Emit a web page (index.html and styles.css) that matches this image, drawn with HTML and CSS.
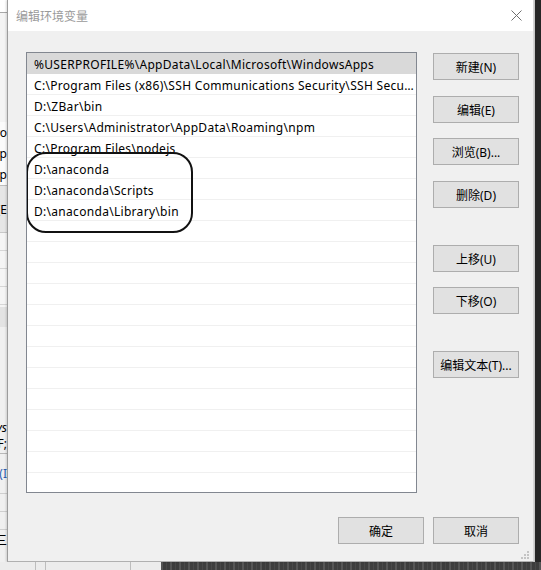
FILE: index.html
```html
<!DOCTYPE html>
<html lang="zh-CN">
<head>
<meta charset="utf-8">
<title>编辑环境变量</title>
<link rel="stylesheet" href="styles.css">
</head>
<body>
<div class="screen">
  <div class="top">
    <div class="bg-left">
      <div class="bl-white"></div>
      <div class="bl-line"></div>
      <div class="bl-pale"></div>
      <div class="bl-text">ro</div>
      <div class="bl-text">p</div>
      <div class="bl-text">p</div>
      <div class="bl-grey"><span>(E</span></div>
      <div class="bl-rows"><div></div><div></div><div></div><div></div></div>
      <div class="bl-grey2"></div>
      <div class="bl-pale2"></div>
      <div class="bl-text2"><i>vs</i></div>
      <div class="bl-text2 bl-under">F;</div>
      <div class="bl-blue">(I</div>
      <div class="bl-rows2"><div></div><div></div></div>
      <div class="bl-text3">三</div>
    </div>

    <div class="dialog">
      <div class="titlebar">
        <span class="title">编辑环境变量</span>
        <svg class="close" width="11" height="11" viewBox="0 0 11 11"><path d="M0.5 0.5 L10.5 10.5 M10.5 0.5 L0.5 10.5" stroke="#6f6f6f" stroke-width="1" fill="none"/></svg>
      </div>
      <div class="body">
        <div class="main">
          <div class="list">
            <div class="row sel">%USERPROFILE%\AppData\Local\Microsoft\WindowsApps</div>
            <div class="row">C:\Program Files (x86)\SSH Communications Security\SSH Secure Shell</div>
            <div class="row">D:\ZBar\bin</div>
            <div class="row">C:\Users\Administrator\AppData\Roaming\npm</div>
            <div class="row">C:\Program Files\nodejs</div>
            <div class="row">D:\anaconda</div>
            <div class="row">D:\anaconda\Scripts</div>
            <div class="row">D:\anaconda\Library\bin</div>
            <div class="row"></div>
            <div class="row"></div>
            <div class="row"></div>
            <div class="row"></div>
            <div class="row"></div>
            <div class="row"></div>
            <div class="row"></div>
            <div class="row"></div>
            <div class="row"></div>
            <div class="row"></div>
            <div class="row"></div>
            <div class="row"></div>
            <div class="row"></div>
            <div class="mark"></div>
          </div>
          <div class="btn-col">
            <div class="btn">新建(N)</div>
            <div class="btn g16">编辑(E)</div>
            <div class="btn g15">浏览(B)...</div>
            <div class="btn g16">删除(D)</div>
            <div class="btn g37">上移(U)</div>
            <div class="btn g15">下移(O)</div>
            <div class="btn g37">编辑文本(T)...</div>
          </div>
        </div>
        <div class="footer">
          <div class="btn">确定</div>
          <div class="btn">取消</div>
        </div>
      </div>
      <svg class="grip" width="8" height="8" viewBox="0 0 8 8">
        <rect x="6" y="0" width="2" height="2" fill="#c4c4c4"/>
        <rect x="3" y="3" width="2" height="2" fill="#c4c4c4"/>
        <rect x="6" y="3" width="2" height="2" fill="#c4c4c4"/>
        <rect x="0" y="6" width="2" height="2" fill="#c4c4c4"/>
        <rect x="3" y="6" width="2" height="2" fill="#c4c4c4"/>
        <rect x="6" y="6" width="2" height="2" fill="#c4c4c4"/>
      </svg>
    </div>

    <div class="bg-right"></div>
  </div>
  <div class="bottom">
    <div class="bottom-light"><div class="vl v1"></div><div class="vl v2"></div><div class="vl v3"></div></div>
    <div class="bottom-dark"></div>
  </div>
</div>
</body>
</html>
```

FILE: styles.css
```css
* { box-sizing: border-box; }
html, body { margin: 0; padding: 0; }
body {
  width: 541px;
  height: 570px;
  overflow: hidden;
  background: #f0f0f0;
  font-family: "Noto Sans", "Noto Sans CJK SC", sans-serif;
  font-size: 12px;
  color: #000;
}
.screen { width: 541px; height: 570px; display: flex; flex-direction: column; }
.top { display: flex; height: 562px; }

/* left background window fragment */
.bg-left { width: 7px; height: 562px; overflow: hidden; background: #f0f0f0; display: flex; flex-direction: column; }
.bg-left > div { flex: none; }
.bl-white { height: 12px; background: #ffffff; }
.bl-line { height: 1px; background: #a8a8a8; }
.bl-pale { height: 109px; background: #f4f4f4; }
.bl-text { height: 21px; line-height: 21px; background: #fbfbfb; display: flex; justify-content: flex-end; font-size: 12px; white-space: nowrap; }
.bl-grey { height: 48px; background: #e6e6e6; border-top: 1px solid #bdbdbd; border-bottom: 1px solid #c8c8c8; display: flex; justify-content: flex-end; align-items: center; white-space: nowrap; }
.bl-rows { height: 74px; background: #f5f5f5; display: flex; flex-direction: column; }
.bl-rows div { height: 18px; border-bottom: 1px solid #d6d6d6; }
.bl-grey2 { height: 20px; background: #e3e3e3; }
.bl-pale2 { height: 93px; background: #f0f0f0; }
.bl-text2 { height: 16px; line-height: 16px; display: flex; justify-content: flex-end; white-space: nowrap; }
.bl-under { border-bottom: 1px solid #b8b8b8; height: 18px; }
.bl-blue { height: 40px; line-height: 40px; color: #2c5fb0; display: flex; justify-content: flex-end; white-space: nowrap; border-bottom: 1px solid #cfcfcf; }
.bl-rows2 { height: 36px; display: flex; flex-direction: column; }
.bl-rows2 div { height: 18px; border-bottom: 1px solid #cfcfcf; }
.bl-text3 { height: 20px; line-height: 20px; display: flex; justify-content: flex-end; white-space: nowrap; font-family: "Noto Sans CJK SC", sans-serif; }

/* dialog */
.dialog {
  position: relative;
  width: 527px;
  height: 562px;
  background: #f0f0f0;
  border-left: 1px solid #9c9c9c;
  border-right: 1px solid #d6d6d6;
  border-bottom: 1px solid #b0b0b0;
  box-shadow: -1px 0 2px rgba(0,0,0,0.15);
  display: flex;
  flex-direction: column;
}
.titlebar {
  height: 31px;
  background: #ffffff;
  display: flex;
  align-items: center;
  justify-content: space-between;
  padding: 0 11px 0 8px;
}
.title {
  font-family: "Noto Sans CJK SC", sans-serif;
  font-size: 12px;
  color: #9a9a9a;
  margin-top: -1px;
}
.close { display: block; }

.body {
  padding: 21px 14px 0 18px;
  display: flex;
  flex-direction: column;
}
.main { display: flex; gap: 16px; }
.list {
  position: relative;
  width: 391px;
  height: 441px;
  background: #ffffff;
  border: 1px solid #828790;
  overflow: hidden;
}
.row {
  height: 21px;
  border-bottom: 1px solid #f0f0f0;
  line-height: 18px;
  padding: 3px 1px 0 7px;
  white-space: nowrap;
  overflow: hidden;
  text-overflow: ellipsis;
  font-size: 12px;
  letter-spacing: 0.3px;
}
.row.sel { background: #d9d9d9; border-bottom-color: #d9d9d9; }
.mark {
  position: absolute;
  left: -1px;
  top: 99px;
  width: 167px;
  height: 81px;
  border: 2px solid #111111;
  border-radius: 20px;
}

.btn-col { display: flex; flex-direction: column; padding-top: 1px; }
.btn {
  width: 86px;
  height: 27px;
  background: #e1e1e1;
  border: 1px solid #adadad;
  display: flex;
  align-items: center;
  justify-content: center;
  font-family: "Noto Sans", "Noto Sans CJK SC", sans-serif;
  font-size: 12px;
  white-space: nowrap;
}
.g15 { margin-top: 15px; }
.g16 { margin-top: 16px; }
.g37 { margin-top: 37px; }

.footer { display: flex; justify-content: flex-end; gap: 9px; margin-top: 24px; }

.grip { position: absolute; right: 4px; bottom: 2px; }

.bg-right {
  width: 7px;
  height: 562px;
  background: #262626;
  border-left: 1px solid #c9c9c9;
}

/* bottom strip */
.bottom { height: 8px; display: flex; }
.bottom-light { position: relative; width: 161px; background: #ececec; display: flex; }
.vl { width: 1px; height: 8px; background: #bdbdbd; }
.v1 { margin-left: 35px; }
.v2 { margin-left: 9px; }
.v3 { margin-left: 84px; }
.bottom-dark {
  flex: 1;
  background:
    repeating-linear-gradient(90deg, rgba(255,255,255,0.12) 0 2px, rgba(0,0,0,0) 2px 5px, rgba(255,255,255,0.06) 5px 6px, rgba(0,0,0,0) 6px 9px),
    #3d3d3d;
}
```
